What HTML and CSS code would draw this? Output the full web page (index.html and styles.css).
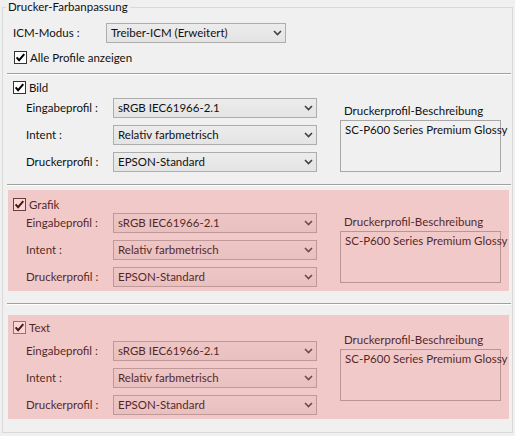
FILE: index.html
```html
<!DOCTYPE html>
<html lang="de">
<head>
<meta charset="utf-8">
<title>Drucker-Farbanpassung</title>
<link rel="stylesheet" href="styles.css">
</head>
<body>
<fieldset class="group">
  <legend class="group-title">Drucker-Farbanpassung</legend>

  <div class="icm-row">
    <span class="icm-label">ICM-Modus :</span>
    <div class="combo combo-icm"><span>Treiber-ICM (Erweitert)</span><svg class="chev" width="9" height="6" viewBox="0 0 9 6"><path d="M1 1l3.5 3.5L8 1" fill="none" stroke="#404040" stroke-width="1.6"/></svg></div>
  </div>

  <div class="check-row">
    <svg class="cb" width="13" height="13" viewBox="0 0 13 13"><rect x=".5" y=".5" width="12" height="12" fill="#fff" stroke="#333"/><path d="M2.6 6.4l2.5 2.8 5.2-6" fill="none" stroke="#000" stroke-width="2"/></svg>
    <span>Alle Profile anzeigen</span>
  </div>

  <div class="sep sep-first"></div>

  <section class="sec sec-bild">
    <div class="sec-left">
      <div class="sec-head">
        <svg class="cb" width="13" height="13" viewBox="0 0 13 13"><rect x=".5" y=".5" width="12" height="12" fill="#fff" stroke="#333"/><path d="M2.6 6.4l2.5 2.8 5.2-6" fill="none" stroke="#000" stroke-width="2"/></svg>
        <span>Bild</span>
      </div>
      <div class="rows">
        <div class="row"><span class="row-label">Eingabeprofil :</span><div class="combo"><span>sRGB IEC61966-2.1</span><svg class="chev" width="9" height="6" viewBox="0 0 9 6"><path d="M1 1l3.5 3.5L8 1" fill="none" stroke="#404040" stroke-width="1.6"/></svg></div></div>
        <div class="row"><span class="row-label">Intent :</span><div class="combo"><span>Relativ farbmetrisch</span><svg class="chev" width="9" height="6" viewBox="0 0 9 6"><path d="M1 1l3.5 3.5L8 1" fill="none" stroke="#404040" stroke-width="1.6"/></svg></div></div>
        <div class="row"><span class="row-label">Druckerprofil :</span><div class="combo"><span>EPSON-Standard</span><svg class="chev" width="9" height="6" viewBox="0 0 9 6"><path d="M1 1l3.5 3.5L8 1" fill="none" stroke="#404040" stroke-width="1.6"/></svg></div></div>
      </div>
    </div>
    <div class="desc">
      <div class="desc-label">Druckerprofil-Beschreibung</div>
      <div class="desc-box">SC-P600 Series Premium Glossy</div>
    </div>
  </section>

  <div class="sep sep-mid"></div>

  <section class="sec sec-tint sec-grafik">
    <div class="sec-left">
      <div class="sec-head">
        <svg class="cb" width="13" height="13" viewBox="0 0 13 13"><rect x=".5" y=".5" width="12" height="12" fill="#fff" stroke="#333"/><path d="M2.6 6.4l2.5 2.8 5.2-6" fill="none" stroke="#000" stroke-width="2"/></svg>
        <span>Grafik</span>
      </div>
      <div class="rows">
        <div class="row"><span class="row-label">Eingabeprofil :</span><div class="combo"><span>sRGB IEC61966-2.1</span><svg class="chev" width="9" height="6" viewBox="0 0 9 6"><path d="M1 1l3.5 3.5L8 1" fill="none" stroke="#404040" stroke-width="1.6"/></svg></div></div>
        <div class="row"><span class="row-label">Intent :</span><div class="combo"><span>Relativ farbmetrisch</span><svg class="chev" width="9" height="6" viewBox="0 0 9 6"><path d="M1 1l3.5 3.5L8 1" fill="none" stroke="#404040" stroke-width="1.6"/></svg></div></div>
        <div class="row"><span class="row-label">Druckerprofil :</span><div class="combo"><span>EPSON-Standard</span><svg class="chev" width="9" height="6" viewBox="0 0 9 6"><path d="M1 1l3.5 3.5L8 1" fill="none" stroke="#404040" stroke-width="1.6"/></svg></div></div>
      </div>
    </div>
    <div class="desc">
      <div class="desc-label">Druckerprofil-Beschreibung</div>
      <div class="desc-box">SC-P600 Series Premium Glossy</div>
    </div>
  </section>

  <div class="sep sep-mid"></div>

  <section class="sec sec-tint sec-text">
    <div class="sec-left">
      <div class="sec-head">
        <svg class="cb" width="13" height="13" viewBox="0 0 13 13"><rect x=".5" y=".5" width="12" height="12" fill="#fff" stroke="#3c82d0"/><path d="M2.6 6.4l2.5 2.8 5.2-6" fill="none" stroke="#000" stroke-width="2"/></svg>
        <span>Text</span>
      </div>
      <div class="rows">
        <div class="row"><span class="row-label">Eingabeprofil :</span><div class="combo"><span>sRGB IEC61966-2.1</span><svg class="chev" width="9" height="6" viewBox="0 0 9 6"><path d="M1 1l3.5 3.5L8 1" fill="none" stroke="#404040" stroke-width="1.6"/></svg></div></div>
        <div class="row"><span class="row-label">Intent :</span><div class="combo"><span>Relativ farbmetrisch</span><svg class="chev" width="9" height="6" viewBox="0 0 9 6"><path d="M1 1l3.5 3.5L8 1" fill="none" stroke="#404040" stroke-width="1.6"/></svg></div></div>
        <div class="row"><span class="row-label">Druckerprofil :</span><div class="combo"><span>EPSON-Standard</span><svg class="chev" width="9" height="6" viewBox="0 0 9 6"><path d="M1 1l3.5 3.5L8 1" fill="none" stroke="#404040" stroke-width="1.6"/></svg></div></div>
      </div>
    </div>
    <div class="desc">
      <div class="desc-label">Druckerprofil-Beschreibung</div>
      <div class="desc-box">SC-P600 Series Premium Glossy</div>
    </div>
  </section>
</fieldset>
</body>
</html>
```

FILE: styles.css
```css
html, body {
  margin: 0;
  padding: 0;
}
body {
  width: 515px;
  height: 436px;
  overflow: hidden;
  background: #f0f0f0;
  color: #111;
  font-family: Lato, "Liberation Sans", Arial, sans-serif;
  font-size: 11.5px;
  line-height: 14px;
  white-space: nowrap;
}

.group {
  margin: 0 2px;
  padding: 0 0 13px 0;
  border: 1px solid #d9d9d9;
  min-width: 0;
}
.group-title {
  margin-left: 3px;
  padding: 0 2px;
  line-height: 14px;
}

.icm-row {
  display: flex;
  align-items: center;
  margin-top: 9px;
  padding-left: 10px;
}
.icm-label {
  width: 93px;
}

.combo {
  display: flex;
  align-items: center;
  justify-content: space-between;
  box-sizing: border-box;
  height: 20px;
  padding: 0 3px 0 4px;
  border: 1px solid #adadad;
  background: linear-gradient(#ececec, #e4e4e4);
}
.combo-icm {
  width: 180px;
}
.chev {
  flex: none;
  display: block;
}

.cb {
  flex: none;
  display: block;
}

.check-row {
  display: flex;
  align-items: center;
  gap: 3px;
  height: 13px;
  margin-top: 8px;
  margin-left: 11px;
}

.sep {
  margin: 0 1px 0 4px;
  border-top: 1px solid #a0a0a0;
  border-bottom: 1px solid #fff;
}
.sep-first {
  margin-top: 9px;
}
.sep-mid {
  margin-top: 12px;
}

.sec {
  position: relative;
  display: flex;
  margin: 0 3px 0 5px;
  padding: var(--pt) 7px var(--pb) 5px;
}
.sec-tint::after {
  content: "";
  position: absolute;
  inset: 0;
  background: rgba(248, 96, 96, 0.27);
  pointer-events: none;
}
.sec-bild {
  --pt: 6px;
  --pb: 0px;
  --rt: 4px;
  --dt: 23px;
}
.sec-grafik {
  --pt: 8px;
  --pb: 4px;
  --rt: 2px;
  --dt: 17px;
  margin-top: 4px;
}
.sec-text {
  --pt: 6px;
  --pb: 4px;
  --rt: 7px;
  --dt: 12px;
  margin-top: 10px;
}

.sec-left {
  width: 304px;
}
.sec-head {
  display: flex;
  align-items: center;
  gap: 3px;
  height: 13px;
}
.rows {
  display: flex;
  flex-direction: column;
  gap: 7px;
  margin-top: var(--rt);
  padding-left: 13px;
}
.row {
  display: flex;
  align-items: center;
}
.row-label {
  width: 87px;
}
.row .combo {
  width: 204px;
}

.desc {
  width: 161px;
  margin-left: 23px;
  padding-top: var(--dt);
}
.desc-label {
  padding-left: 4px;
  margin-bottom: 2px;
  line-height: 14px;
}
.desc-box {
  box-sizing: border-box;
  height: 52px;
  padding: 2px 4px;
  border: 1px solid #a8a8a8;
  line-height: 14px;
}
```
